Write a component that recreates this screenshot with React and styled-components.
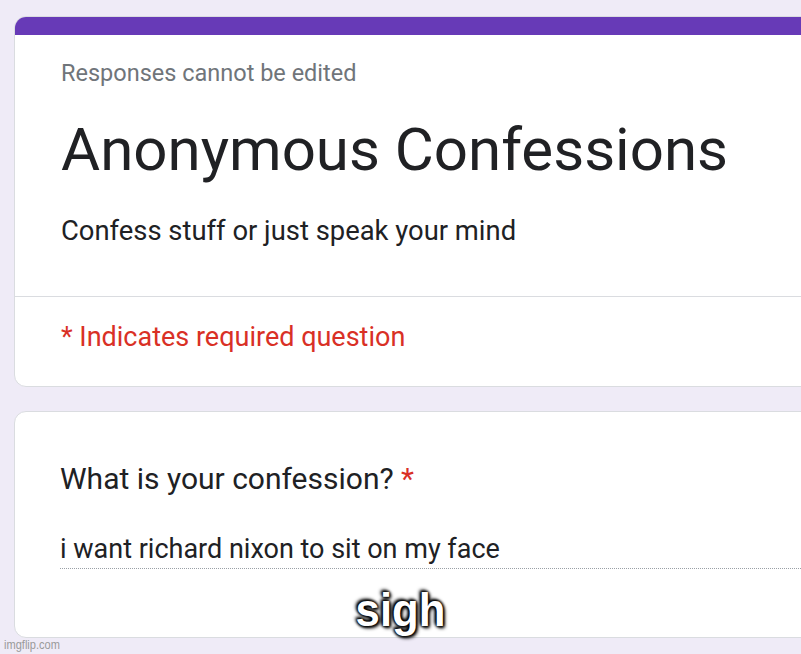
import React from "react";
import styled, { createGlobalStyle } from "styled-components";

const GlobalStyle = createGlobalStyle`
  html, body {
    margin: 0;
    padding: 0;
    background: #efebf7;
    overflow: hidden;
  }
  body {
    font-family: Roboto, "Liberation Sans", sans-serif;
  }
`;

// page holds the two form cards, they run off the right edge like the screenshot
const Page = styled.div`
  position: relative;
  width: 801px;
  height: 654px;
  overflow: hidden;
  padding: 16px 0 0 14px;
  box-sizing: border-box;
  display: flex;
  flex-direction: column;
  gap: 24px;
`;

const Card = styled.div`
  width: 840px;
  background: #fff;
  border: 1px solid #dadce0;
  border-radius: 12px;
  overflow: hidden;
  box-sizing: border-box;
  flex-shrink: 0;
`;

const TopBar = styled.div`
  height: 19px;
  background: #673ab7;
  margin: -1px -1px 0 -1px;
`;

const Section = styled.div`
  padding: ${(p) => p.$pad};
  border-top: ${(p) => (p.$divider ? "1px solid #dadce0" : "none")};
`;

const Text = styled.div`
  font-size: ${(p) => p.$size}px;
  line-height: ${(p) => p.$lh}px;
  color: ${(p) => p.$color || "#202124"};
  margin-top: ${(p) => p.$mt || 0}px;
  white-space: nowrap;
`;

const Star = styled.span`
  color: #d93025;
`;

const Answer = styled.div`
  margin-top: 36px;
  font-size: 27px;
  line-height: 32px;
  color: #202124;
  padding-bottom: 3px;
  border-bottom: 1px dotted #9aa0a6;
  white-space: nowrap;
`;

const Caption = styled.div`
  position: absolute;
  left: 0;
  right: 0;
  top: 582px;
  text-align: center;
  font-family: "Liberation Sans", Arial, sans-serif;
  font-weight: bold;
  font-size: 47px;
  line-height: 56px;
  color: #fff;
  transform: scaleX(0.93);
  text-shadow: 0 0 3px #000, 0 0 3px #000, 0 0 4px #000, 2px 2px 4px #000,
    -2px -2px 4px #000;
`;

const Watermark = styled.div`
  position: absolute;
  left: 4px;
  bottom: 2px;
  font-family: "Liberation Sans", Arial, sans-serif;
  font-size: 13px;
  color: #9a9a9a;
  transform: scaleX(0.85);
  transform-origin: left center;
`;

export default function App() {
  return (
    <>
      <GlobalStyle />
      <Page>
        <Card>
          <TopBar />
          <Section $pad="24px 46px 49px">
            <Text $size={23.5} $lh={28} $color="#70757a">
              Responses cannot be edited
            </Text>
            <Text $size={60} $lh={72} $mt={27}>
              Anonymous Confessions
            </Text>
            <Text $size={27.4} $lh={32} $mt={29}>
              Confess stuff or just speak your mind
            </Text>
          </Section>
          <Section $divider $pad="24px 46px 33px">
            <Text $size={27} $lh={32} $color="#d93025">
              * Indicates required question
            </Text>
          </Section>
        </Card>
        <Card>
          <Section $pad="49px 0 68px 45px">
            <Text $size={30} $lh={36}>
              What is your confession? <Star>*</Star>
            </Text>
            <Answer>i want richard nixon to sit on my face</Answer>
          </Section>
        </Card>
        <Caption>sigh</Caption>
        <Watermark>imgflip.com</Watermark>
      </Page>
    </>
  );
}
